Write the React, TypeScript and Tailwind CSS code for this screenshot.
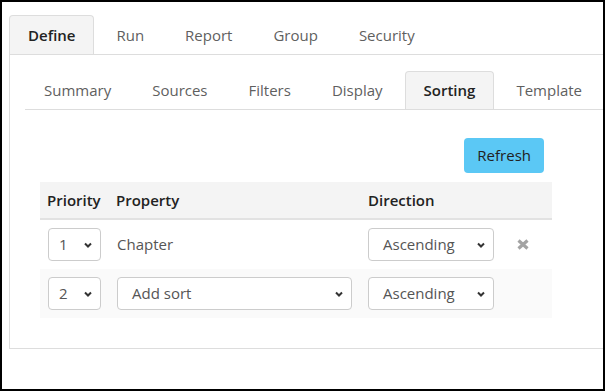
import React from "react";

const mainTabs = ["Define", "Run", "Report", "Group", "Security"];
const subTabs = ["Summary", "Sources", "Filters", "Display", "Sorting", "Template"];

const Chevron = () => (
    <svg width="8" height="6" viewBox="0 0 8 6" className="shrink-0">
        <polyline points="1,1.5 4,4.5 7,1.5" fill="none" stroke="#333" strokeWidth="2" />
    </svg>
);

const RemoveIcon = () => (
    <svg width="12" height="11" viewBox="0 0 12 11">
        <path d="M1.5 1.5 L10.5 9.5 M10.5 1.5 L1.5 9.5" stroke="#a3a3a3" strokeWidth="3.2" />
    </svg>
);

const FakeSelect = ({ value, width, pl }: { value: string; width: string; pl: string }) => (
    <div
        className={`${width} ${pl} h-[33px] pr-[8px] flex items-center justify-between border border-[#cccccc] rounded-[4px] bg-white text-[15px] text-[#555]`}
    >
        <span>{value}</span>
        <Chevron />
    </div>
);

const Tab = ({ label, active }: { label: string; active: boolean }) => (
    <li
        className={
            active
                ? "px-[18px] flex items-center border border-b-0 border-[#dddddd] rounded-t-[4px] bg-[#f4f4f4] text-[#222] font-semibold mr-[3px]"
                : "px-[18px] flex items-center border border-b-0 border-transparent text-[#5f5f5f] mr-[3px]"
        }
    >
        {label}
    </li>
);

export default function App() {
    return (
        <div
            className="w-[605px] h-[391px] border-2 border-black overflow-hidden bg-white text-[15px]"
            style={{ fontFamily: '"Open Sans", "Noto Sans", sans-serif' }}
        >
            <div className="pt-[13px] pl-[7px] w-[640px]">
                <ul className="flex h-[40px] border-b border-[#dddddd]">
                    {mainTabs.map((t) => (
                        <Tab key={t} label={t} active={t === "Define"} />
                    ))}
                </ul>

                <div className="border-x border-b border-[#dddddd] px-[15px] pt-[16px] pb-[30px]">
                    <ul className="flex h-[39px] border-b border-[#dddddd]">
                        {subTabs.map((t) => (
                            <Tab key={t} label={t} active={t === "Sorting"} />
                        ))}
                    </ul>

                    <div className="px-[15px] pt-[28px]">
                        <div className="w-[512px] flex justify-end pr-[8px]">
                            <button className="h-[35px] px-[13px] rounded-[4px] bg-[#5bc8f5] text-[#222]">
                                Refresh
                            </button>
                        </div>

                        <div className="w-[512px] mt-[9px]">
                            {/* header */}
                            <div className="grid grid-cols-[69px_251px_142px_50px] h-[38px] items-center bg-[#f4f4f4] border-b-2 border-[#e2e2e2] font-semibold text-[#222]">
                                <div className="pl-[7px]">Priority</div>
                                <div className="pl-[7px]">Property</div>
                                <div className="pl-[8px]">Direction</div>
                                <div />
                            </div>

                            {/* row 1 */}
                            <div className="grid grid-cols-[69px_251px_142px_50px] h-[49px] items-center bg-white">
                                <div className="pl-[8px]">
                                    <FakeSelect value="1" width="w-[53px]" pl="pl-[10px]" />
                                </div>
                                <div className="pl-[8px] text-[#555]">Chapter</div>
                                <div className="pl-[8px]">
                                    <FakeSelect value="Ascending" width="w-[126px]" pl="pl-[14px]" />
                                </div>
                                <div className="pl-[15px] flex items-center">
                                    <RemoveIcon />
                                </div>
                            </div>

                            {/* row 2 */}
                            <div className="grid grid-cols-[69px_251px_142px_50px] h-[49px] items-center bg-[#fafafa]">
                                <div className="pl-[8px]">
                                    <FakeSelect value="2" width="w-[53px]" pl="pl-[10px]" />
                                </div>
                                <div className="pl-[8px]">
                                    <FakeSelect value="Add sort" width="w-[235px]" pl="pl-[14px]" />
                                </div>
                                <div className="pl-[8px]">
                                    <FakeSelect value="Ascending" width="w-[126px]" pl="pl-[14px]" />
                                </div>
                                <div />
                            </div>
                        </div>
                    </div>
                </div>
            </div>
        </div>
    );
}
